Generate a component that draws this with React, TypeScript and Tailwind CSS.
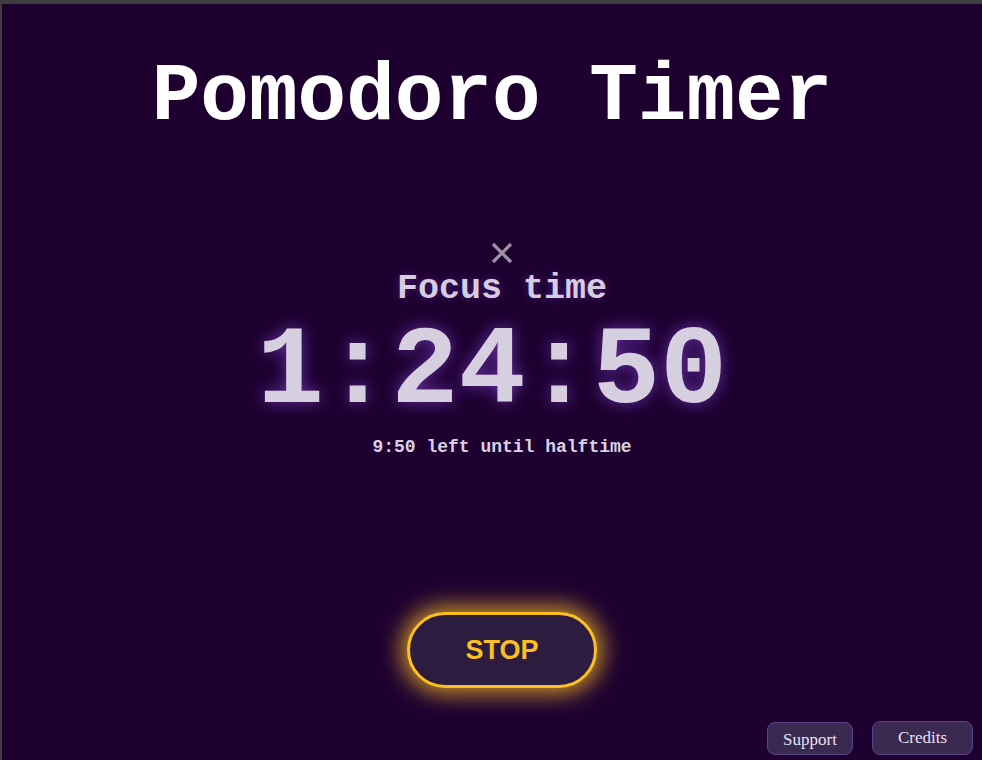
import { useState } from "react";

function CloseIcon() {
    return (
        <svg width="22" height="22" viewBox="0 0 22 22" className="block">
            <path d="M2 2 L20 20 M20 2 L2 20" stroke="#9b92a4" strokeWidth="3.2" strokeLinecap="butt" />
        </svg>
    );
}

export default function App() {
    const [running, setRunning] = useState(true);

    return (
        <div className="h-screen w-full overflow-hidden border-t-4 border-l-2 border-[#3f3d40] bg-[#1d0030] flex flex-col items-center">
            <h1 className="mt-[53px] text-[81px] leading-none font-bold text-white font-['Liberation_Mono',monospace]">
                Pomodoro Timer
            </h1>

            {/* timer block sits a bit right of page center */}
            <div className="self-stretch pl-[20px] flex flex-col items-center">
                <button className="mt-[104px] cursor-pointer" aria-label="close">
                    <CloseIcon />
                </button>

                <div className="mt-[8px] text-[35px] leading-none font-bold text-[#d6cde2] font-['Liberation_Mono',monospace] [text-shadow:0_0_8px_rgba(120,60,180,0.5)]">
                    Focus time
                </div>

                <div className="mt-[10px] mr-[20px] text-[112px] leading-none font-bold text-[#d6cfe0] font-['Liberation_Mono',monospace] [text-shadow:0_0_16px_rgba(120,60,190,0.8)]">
                    1:24:50
                </div>

                <div className="mt-[9px] text-[18px] leading-none font-bold text-[#d9d2e6] font-['Liberation_Mono',monospace]">
                    9:50 left until halftime
                </div>

                <button
                    onClick={() => setRunning(!running)}
                    className="mt-[156px] w-[190px] h-[76px] rounded-full border-[3px] border-[#fbbf24] bg-[#2c1d40] shadow-[0_0_22px_6px_rgba(251,191,36,0.75)] text-[27px] font-bold text-[#fbbf24] font-['Liberation_Sans',Arial,sans-serif] cursor-pointer"
                >
                    {running ? "STOP" : "START"}
                </button>
            </div>

            <div className="mt-auto self-stretch flex justify-end items-end gap-[19px] pr-[9px] pb-[5px]">
                <button className="w-[86px] h-[33px] rounded-lg border border-[#5e3f8c] bg-[#3a2950] text-[17px] text-[#e8e0f2] font-['Liberation_Serif',serif] pt-[2px]">
                    Support
                </button>
                <button className="w-[101px] h-[34px] rounded-lg border border-[#5e3f8c] bg-[#3a2950] text-[17px] text-[#e8e0f2] font-['Liberation_Serif',serif]">
                    Credits
                </button>
            </div>
        </div>
    );
}
